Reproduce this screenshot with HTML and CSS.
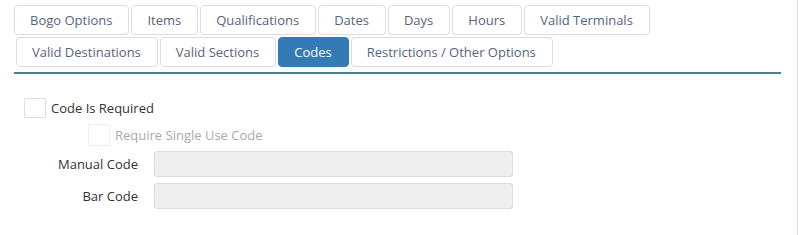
FILE: index.html
```html
<!DOCTYPE html>
<html lang="en">
<head>
    <meta charset="UTF-8">
    <title>Codes</title>
    <link rel="stylesheet" href="styles.css">
</head>
<body>
    <div class="page">
        <ul class="tabs">
            <li class="tab">Bogo Options</li>
            <li class="tab">Items</li>
            <li class="tab">Qualifications</li>
            <li class="tab">Dates</li>
            <li class="tab">Days</li>
            <li class="tab">Hours</li>
            <li class="tab">Valid Terminals</li>
            <li class="tab row_start">Valid Destinations</li>
            <li class="tab">Valid Sections</li>
            <li class="tab active">Codes</li>
            <li class="tab">Restrictions / Other Options</li>
        </ul>
        <div class="tab_line"></div>

        <div class="form">
            <label class="chk_row">
                <span class="chk"></span>
                Code Is Required
            </label>
            <label class="chk_row sub disabled">
                <span class="chk"></span>
                Require Single Use Code
            </label>
            <div class="field">
                <span class="lbl">Manual Code</span>
                <input type="text" class="txt" disabled>
            </div>
            <div class="field">
                <span class="lbl">Bar Code</span>
                <input type="text" class="txt" disabled>
            </div>
        </div>
    </div>
</body>
</html>
```

FILE: styles.css
```css
* {
  box-sizing: border-box;
  font-family: "Open Sans", sans-serif;
}
body {
  margin: 0;
  background: #fff;
}
.page {
  width: 798px;
  height: 235px;
  border-right: 1px solid #dcdcdc;
  padding: 5px 16px 0 14px;
}
.tabs {
  list-style: none;
  margin: 0;
  padding: 0;
  display: flex;
  flex-wrap: wrap;
  gap: 2px 2px;
}
.tab {
  height: 30px;
  padding: 0 16px 0 15px;
  border: 1px solid #dddddd;
  border-radius: 4px;
  font-size: 13px;
  line-height: 28px;
  color: #56657a;
  background: #fff;
}
.tab.row_start {
  margin-left: 2px;
}
.tab.active {
  background: #337ab7;
  border-color: #337ab7;
  color: #fff;
}
.tab_line {
  margin-top: 5px;
  height: 2px;
  background: #4b7f8e;
}
.form {
  padding-top: 24px;
  padding-left: 10px;
  font-size: 13px;
  color: #333;
}
.chk_row {
  display: flex;
  align-items: center;
  gap: 5px;
  height: 20px;
}
.chk {
  width: 22px;
  height: 20px;
  border: 1px solid #dddddd;
  border-radius: 2px;
  background: #fff;
}
.sub {
  margin-top: 6px;
  margin-left: 64px;
  height: 22px;
}
.sub .chk {
  height: 22px;
  border-color: #eeeeee;
}
.disabled {
  color: #aaaaaa;
}
.field {
  display: flex;
  align-items: center;
  margin-top: 5px;
}
.field + .field {
  margin-top: 6px;
}
.lbl {
  width: 114px;
  text-align: right;
  margin-right: 16px;
}
.txt {
  width: 359px;
  height: 26px;
  border: 1px solid #dddddd;
  border-radius: 3px;
  background: #eeeeee;
}
```
